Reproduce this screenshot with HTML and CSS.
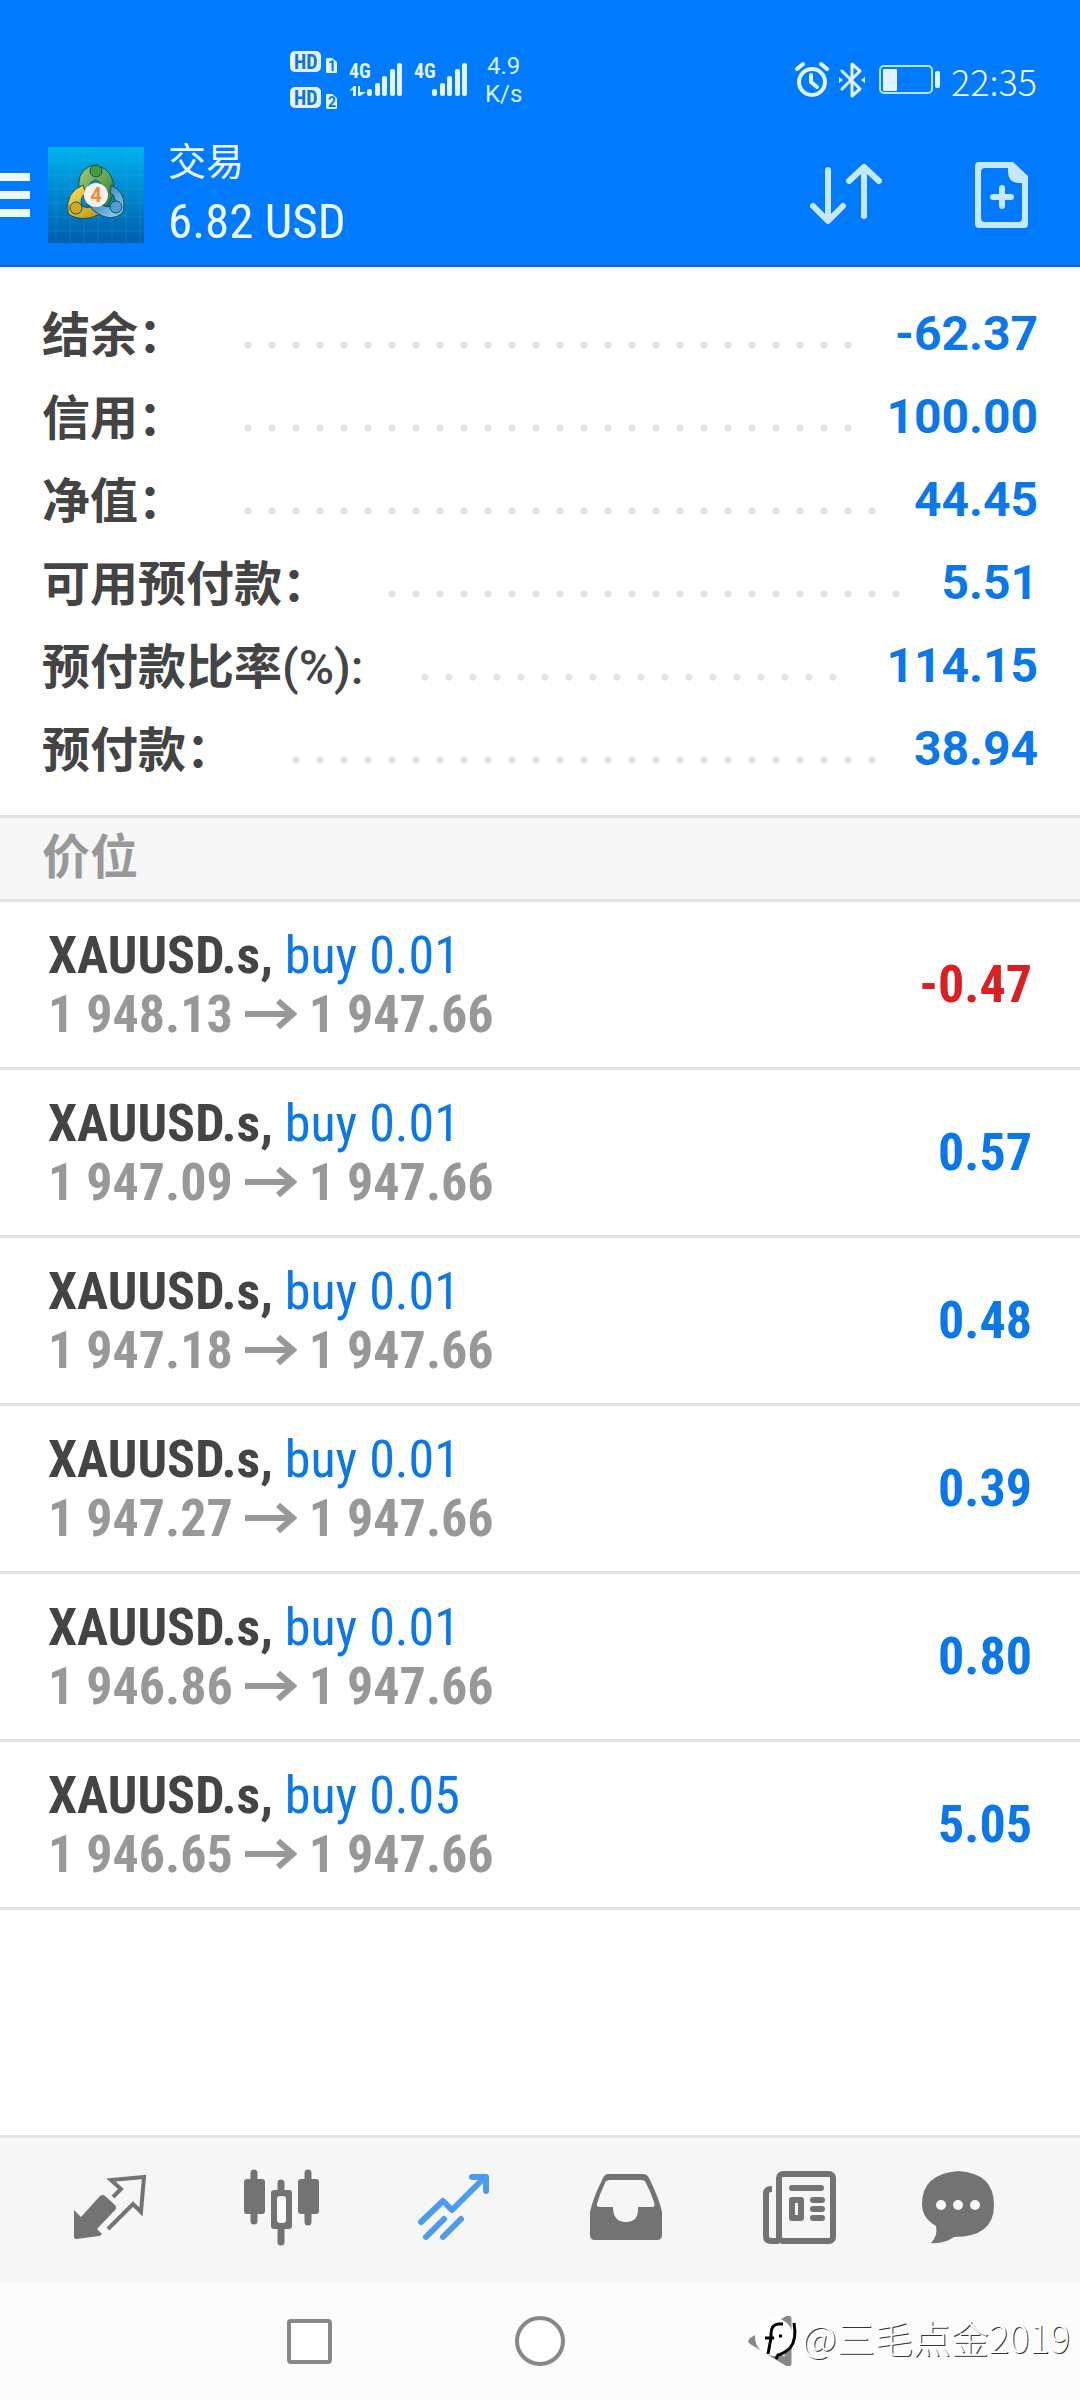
FILE: index.html
```html
<!DOCTYPE html>
<html lang="zh-CN">
<head>
<meta charset="utf-8">
<meta name="viewport" content="width=device-width, initial-scale=1">
<title>交易</title>
<link rel="stylesheet" href="styles.css">
</head>
<body>
<svg class="defs" aria-hidden="true">
  <symbol id="arrow" viewBox="0 0 52 30"><path d="M0 15H47M33 2L48 15L33 28" fill="none" stroke="currentColor" stroke-width="6"/></symbol>
</svg>
<div class="app">
  <header class="top">
    <div class="status">
      <svg class="status-signal" viewBox="0 0 180 64" role="img" aria-label="HD 1, HD 2, 4G, 4G">
        <g fill="#dff4ff">
          <rect x="0" y="3" width="31" height="21" rx="5"/>
          <rect x="0" y="39" width="31" height="21" rx="5"/>
          <path d="M36 11q0-1 1-1h5l5 4v10q0 1-1 1h-9q-1 0-1-1zM36 47q0-1 1-1h5l5 4v10q0 1-1 1h-9q-1 0-1-1z"/>
          <rect x="77" y="41" width="5" height="7" rx="2"/><rect x="85" y="35" width="5" height="13" rx="2"/><rect x="92" y="28" width="5" height="20" rx="2"/><rect x="100" y="21" width="5" height="27" rx="2"/><rect x="107" y="15" width="5" height="33" rx="2"/>
          <rect x="142" y="41" width="5" height="7" rx="2"/><rect x="150" y="35" width="5" height="13" rx="2"/><rect x="157" y="28" width="5" height="20" rx="2"/><rect x="165" y="21" width="5" height="27" rx="2"/><rect x="172" y="15" width="5" height="33" rx="2"/>
          <path d="M59 43l5-5h2v10h-3v-6zM68 38h2v6h6l-6 4h-2z"/>
        </g>
        <g class="sig-hd"><text x="4" y="21">HD</text><text x="4" y="57">HD</text></g>
        <g class="sig-sim"><text x="38" y="23">1</text><text x="38" y="59">2</text></g>
        <g class="sig-net"><text x="59" y="30">4G</text><text x="124" y="30">4G</text></g>
      </svg>
      <div class="status-speed">4.9<br>K/s</div>
      <svg class="status-icons" viewBox="0 0 148 40" role="img" aria-label="闹钟 蓝牙 电池">
        <g fill="none" stroke="#dff4ff" stroke-linecap="round" stroke-linejoin="round">
          <circle cx="17" cy="22" r="13" stroke-width="4"/>
          <path d="M16 15v7l6 5" stroke-width="4"/>
          <path d="M2 9l6-5M26 4l6 5" stroke-width="4"/>
          <path d="M47 11l18 18-8 7V4l8 7-18 18" stroke-width="3"/>
          <rect x="85" y="6" width="52" height="27" rx="4" stroke-width="2" stroke="#aee6ff"/>
        </g>
        <path fill="#dff4ff" d="M44 17l4 3-4 3zM70 17l-4 3 4 3zM88 10q0-1 1-1h12q1 0 1 1v20q0 1-1 1H89q-1 0-1-1zM140 13q0-2 3-2 2 0 2 2v13q0 2-2 2-3 0-3-2z"/>
      </svg>
      <time class="status-time">22:35</time>
    </div>
    <div class="bar">
      <button class="menu" aria-label="菜单"><svg viewBox="0 0 30 44"><path d="M0 0h30v8H0zM0 18h30v8H0zM0 36h30v8H0z" fill="#edf9ff"/></svg></button>
      <svg class="logo" viewBox="0 0 96 96" role="img" aria-label="MetaTrader 4">
        <defs>
          <linearGradient id="lb" x1="0" y1="0" x2="0" y2="1"><stop offset="0" stop-color="#00b2ea"/><stop offset=".5" stop-color="#0086cf"/><stop offset="1" stop-color="#005fac"/></linearGradient>
          <linearGradient id="lg" x1="0" y1="0" x2="1" y2="1"><stop offset="0" stop-color="#a5d07c"/><stop offset="1" stop-color="#237c2e"/></linearGradient>
          <linearGradient id="ly" x1="0" y1="0" x2="1" y2="1"><stop offset="0" stop-color="#f5e560"/><stop offset="1" stop-color="#b78b0a"/></linearGradient>
          <linearGradient id="lu" x1="0" y1="0" x2="1" y2="1"><stop offset="0" stop-color="#1b65ad"/><stop offset="1" stop-color="#9ad8f7"/></linearGradient>
        </defs>
        <path fill="url(#lb)" d="M0 0h96v96H0z"/>
        <path d="M8 0v96M22 0v96M36 0v96M50 0v96M64 0v96M78 0v96M92 0v96M0 14h96M0 28h96M0 42h96M0 56h96M0 70h96M0 84h96" stroke="#46c4ee" stroke-opacity=".18"/>
        <g stroke="#174c52" stroke-width="1">
          <path fill="url(#lg)" d="M32 46Q27 26 42 19Q60 17 65 34Q68 49 58 60L51 50Q57 36 48 33Q40 35 38 46z"/>
          <path fill="url(#ly)" d="M35 38Q17 45 20 66Q26 73 42 71Q51 69 58 62L50 53Q43 64 34 59Q31 51 38 46z"/>
          <path fill="url(#lu)" d="M63 38Q77 45 76 59Q77 69 62 71Q48 69 41 58L50 54Q59 64 67 57Q68 48 62 46z"/>
          <circle cx="48" cy="24" r="6" fill="#459b42"/><circle cx="28" cy="61" r="6" fill="#d9a81b"/><circle cx="68" cy="60" r="6" fill="#4f9cd8"/>
        </g>
        <circle cx="48" cy="48" r="12" fill="#f7f2ee"/>
        <text class="logo-num" x="48" y="55">4</text>
      </svg>
      <div class="heading"><h1 class="title">交易</h1><p class="profit">6.82 USD</p></div>
      <button class="act" aria-label="排序"><svg viewBox="0 0 74 68"><path d="M18 9v50M3 45l15 15 15-15M54 55V7M39 20L54 6l15 14" fill="none" stroke="#c5e8ff" stroke-width="6" stroke-linecap="round" stroke-linejoin="round"/></svg></button>
      <button class="act" aria-label="新订单"><svg viewBox="0 0 74 68"><path fill="#c5e8ff" fill-rule="evenodd" d="M13 1h34l15 14v48q0 4-4 4H13q-4 0-4-4V5q0-4 4-4zm6 6q-4 0-4 4v46q0 4 4 4h33q4 0 4-4V22h-4q-10-1-10-11V7z"/><path d="M36 27v18M27 36h18" stroke="#c5e8ff" stroke-width="6" stroke-linecap="round"/></svg></button>
    </div>
  </header>

  <main class="main">
    <dl class="summary">
      <div class="sum-row"><dt>结余：</dt><dd>-62.37</dd></div>
      <div class="sum-row"><dt>信用：</dt><dd>100.00</dd></div>
      <div class="sum-row"><dt>净值：</dt><dd>44.45</dd></div>
      <div class="sum-row"><dt>可用预付款：</dt><dd>5.51</dd></div>
      <div class="sum-row"><dt>预付款比率<span class="unit">(%):</span></dt><dd>114.15</dd></div>
      <div class="sum-row"><dt>预付款：</dt><dd>38.94</dd></div>
    </dl>
    <h2 class="section">价位</h2>
    <ul class="positions">
      <li class="pos"><div class="pos-info"><p class="pos-name"><b>XAUUSD.s,</b> buy 0.01</p><p class="pos-price">1 948.13 <svg class="arrow" role="img" aria-label="→"><use href="#arrow"/></svg> 1 947.66</p></div><span class="pos-pl loss">-0.47</span></li>
      <li class="pos"><div class="pos-info"><p class="pos-name"><b>XAUUSD.s,</b> buy 0.01</p><p class="pos-price">1 947.09 <svg class="arrow" role="img" aria-label="→"><use href="#arrow"/></svg> 1 947.66</p></div><span class="pos-pl">0.57</span></li>
      <li class="pos"><div class="pos-info"><p class="pos-name"><b>XAUUSD.s,</b> buy 0.01</p><p class="pos-price">1 947.18 <svg class="arrow" role="img" aria-label="→"><use href="#arrow"/></svg> 1 947.66</p></div><span class="pos-pl">0.48</span></li>
      <li class="pos"><div class="pos-info"><p class="pos-name"><b>XAUUSD.s,</b> buy 0.01</p><p class="pos-price">1 947.27 <svg class="arrow" role="img" aria-label="→"><use href="#arrow"/></svg> 1 947.66</p></div><span class="pos-pl">0.39</span></li>
      <li class="pos"><div class="pos-info"><p class="pos-name"><b>XAUUSD.s,</b> buy 0.01</p><p class="pos-price">1 946.86 <svg class="arrow" role="img" aria-label="→"><use href="#arrow"/></svg> 1 947.66</p></div><span class="pos-pl">0.80</span></li>
      <li class="pos"><div class="pos-info"><p class="pos-name"><b>XAUUSD.s,</b> buy 0.05</p><p class="pos-price">1 946.65 <svg class="arrow" role="img" aria-label="→"><use href="#arrow"/></svg> 1 947.66</p></div><span class="pos-pl">5.05</span></li>
    </ul>
  </main>

  <nav class="tabs">
    <button class="tab" aria-label="行情"><svg viewBox="0 0 80 80"><path fill="currentColor" d="M4 38l7 7 19-21q3-2 5 0l10 9q2 3 0 5L27 57l5 5q-1 2-3 2L6 67q-2 0-2-2z"/><path d="M43 25l8-8-10-9 33-3-3 35-8-8-25 25" fill="none" stroke="currentColor" stroke-width="4"/></svg></button>
    <button class="tab" aria-label="图表"><svg viewBox="0 0 80 80"><path d="M12 1v48M39 11v59M66 1v49" stroke="currentColor" stroke-width="7" stroke-linecap="round"/><g fill="currentColor"><rect x="2" y="7" width="21" height="35" rx="3"/><rect x="56" y="7" width="21" height="35" rx="3"/><rect x="29" y="18" width="21" height="39" rx="3"/></g><rect x="35" y="24" width="9" height="27" rx="3" fill="#fafafa"/></svg></button>
    <button class="tab active" aria-label="交易"><svg viewBox="0 0 80 80"><path d="M7 50l22-21 9 9L68 8M58 5h14v14M12 65l18-18M29 65l18-18" fill="none" stroke="currentColor" stroke-width="6" stroke-linecap="round" stroke-linejoin="round"/></svg></button>
    <button class="tab" aria-label="历史"><svg viewBox="0 0 80 80"><path fill="currentColor" fill-rule="evenodd" d="M22 2h35q4 0 6 4 10 20 13 34v23q0 5-5 5H9q-5 0-5-5V40Q7 26 17 6q2-4 5-4zm2 6q-4 0-5 3-5 10-8 21-1 3 3 3h13q0 15 13 15t12-15h14q4 0 2-5-3-9-8-19-1-3-5-3z"/></svg></button>
    <button class="tab" aria-label="新闻"><svg viewBox="0 0 80 80"><g fill="none" stroke="currentColor" stroke-width="6"><rect x="21" y="2" width="54" height="67" rx="4"/><path d="M14 17h-1q-5 0-5 5v42q0 5 5 5h8"/><path d="M34 16h29M55 28h9M55 37h9M55 46h9" stroke-linecap="round"/></g><path fill="currentColor" fill-rule="evenodd" d="M34 25h9q3 0 3 3v18q0 3-3 3h-9q-3 0-3-3V28q0-3 3-3zm3 6v12h3V31z"/></svg></button>
    <button class="tab" aria-label="消息"><svg viewBox="0 0 80 80"><path fill="currentColor" d="M28-1q36 2 36 34 0 32-40 32-10 7-23 6 7-7 5-17Q-8 46-8 32-8 2 28-1z"/><g fill="#fafafa"><circle cx="11" cy="33" r="5"/><circle cx="28" cy="33" r="5"/><circle cx="45" cy="33" r="5"/></g></svg></button>
  </nav>

  <footer class="sysnav">
    <button class="sys" aria-label="最近任务"><svg viewBox="0 0 50 50"><rect x="5" y="5" width="41" height="41" rx="2" fill="#fff" stroke="#888" stroke-width="4"/></svg></button>
    <button class="sys" aria-label="主页"><svg viewBox="0 0 50 50"><circle cx="25" cy="25" r="23" fill="#fff" stroke="#888" stroke-width="4"/></svg></button>
    <button class="sys" aria-label="返回"><svg viewBox="0 0 50 50"><path d="M6 25L42 3v44z" fill="#fff" stroke="#888" stroke-width="7" stroke-linejoin="round"/></svg></button>
    <div class="mark">
      <svg class="mark-logo" viewBox="0 0 48 52"><circle cx="20" cy="26" r="19" fill="#fff"/><path d="M29 13h-5q-7 1-7 10v3M11 27h9M17 27l-3 16M40 12q3 17-4 25-5 5-12 7l-2 4M25 25h3" fill="none" stroke="#000" stroke-width="3"/></svg>
      <span class="mark-text">@三毛点金2019</span>
    </div>
  </footer>
</div>
</body>
</html>
```
FILE: styles.css
```css
* { box-sizing: border-box; }
body, h1, h2, p, dl, dd, ul { margin: 0; padding: 0; }
body {
  background: #fff;
  font-family: Roboto, "Noto Sans CJK SC", sans-serif;
  color: #444;
}
button { border: 0; padding: 0; background: none; color: inherit; display: block; }
svg { display: block; }
ul { list-style: none; }
.defs { display: none; }
.app { display: flex; flex-direction: column; min-height: 100vh; }

/* header */
.top { background: #007aff; color: #edf9ff; border-bottom: 2px solid #1a68b8; }
.status { display: flex; align-items: center; height: 128px; padding: 32px 43px 0 290px; }
.status-signal { width: 180px; height: 64px; }
.sig-hd { font-size: 20px; font-weight: 700; fill: #1672cf; font-family: "Roboto Condensed", Roboto, sans-serif; }
.sig-sim { font-size: 14px; font-weight: 700; fill: #1672cf; }
.sig-net { font-size: 20px; font-weight: 700; fill: #dff4ff; font-family: "Roboto Condensed", Roboto, sans-serif; }
.status-speed { margin-left: 15px; font-size: 24px; line-height: 28px; text-align: center; color: #d5f0ff; }
.status-icons { width: 148px; height: 40px; margin-left: auto; }
.status-time { margin-left: 8px; font: 300 36px/36px "Noto Sans CJK SC", sans-serif; }
.bar { display: flex; align-items: center; height: 137px; padding: 0 40px 4px 0; }
.menu { width: 30px; height: 44px; }
.logo { width: 96px; height: 96px; margin: 0 24px 0 18px; }
.logo-num { font-size: 20px; font-weight: 700; fill: #f08a3c; text-anchor: middle; }
.heading { flex: 1; }
.title { font: 400 38px/54px "Noto Sans CJK SC", sans-serif; }
.profit { font: 400 49px/72px "Roboto Condensed", Roboto, sans-serif; }
.act { width: 74px; height: 68px; margin-left: 82px; }

/* account summary */
.summary { padding: 25px 42px; border-bottom: 3px solid #e2e2e2; font-size: 48px; font-weight: 700; }
.sum-row { display: flex; align-items: center; height: 83px; }
.sum-row dt { display: flex; flex: 1; align-items: baseline; height: 83px; white-space: nowrap; font-family: "Noto Sans CJK SC", sans-serif; line-height: 78px; }
.sum-row dt::after {
  content: "";
  flex: 1;
  align-self: stretch;
  margin: 0 33px 0 50px;
  background: radial-gradient(circle at 12px 53px, #e2e2e2 3px, transparent 4px) 0 0 / 24px 100% repeat-x;
}
.unit { font-family: Roboto, sans-serif; font-weight: 500; line-height: 60px; }
.sum-row dd { color: #0b78ea; }
.section {
  height: 84px;
  padding-left: 42px;
  background: #f7f7f7;
  border-bottom: 3px solid #e2e2e2;
  font: 700 48px/70px "Noto Sans CJK SC", sans-serif;
  color: #98989a;
}

/* positions */
.pos {
  display: flex;
  align-items: center;
  justify-content: space-between;
  height: 168px;
  padding: 0 48px;
  border-bottom: 3px solid #e2e2e2;
  font: 700 52px/59px "Roboto Condensed", Roboto, sans-serif;
}
.pos-name { font-weight: 400; color: #0b78ea; }
.pos-name b { color: #444; }
.pos-price { display: flex; align-items: center; gap: 12px; color: #98989a; }
.arrow { width: 52px; height: 30px; }
.pos-pl { color: #0b78ea; }
.pos-pl.loss { color: #d92023; }

/* bottom bars */
.tabs {
  display: flex;
  height: 147px;
  margin-top: auto;
  padding: 3px 24px 0;
  align-items: center;
  background: #f6f6f6;
  border-top: 3px solid #e4e4e4;
  color: #737373;
}
.tab { flex: 1; display: flex; justify-content: center; }
.tab svg { width: 80px; height: 80px; overflow: visible; }
.tab.active { color: #4b9bf0; }
.sysnav { position: relative; display: flex; height: 118px; padding: 0 194px; align-items: center; background: #fcfcfc; }
.sys { flex: 1; display: flex; justify-content: center; }
.sys svg { width: 50px; height: 50px; }
.mark { position: absolute; right: 10px; bottom: 37px; display: flex; align-items: center; }
.mark-logo { width: 48px; height: 52px; }
.mark-text { font: 300 38px/44px "Noto Sans CJK SC", sans-serif; color: #fff; text-shadow: 1px 1px 0 #333; }
```
